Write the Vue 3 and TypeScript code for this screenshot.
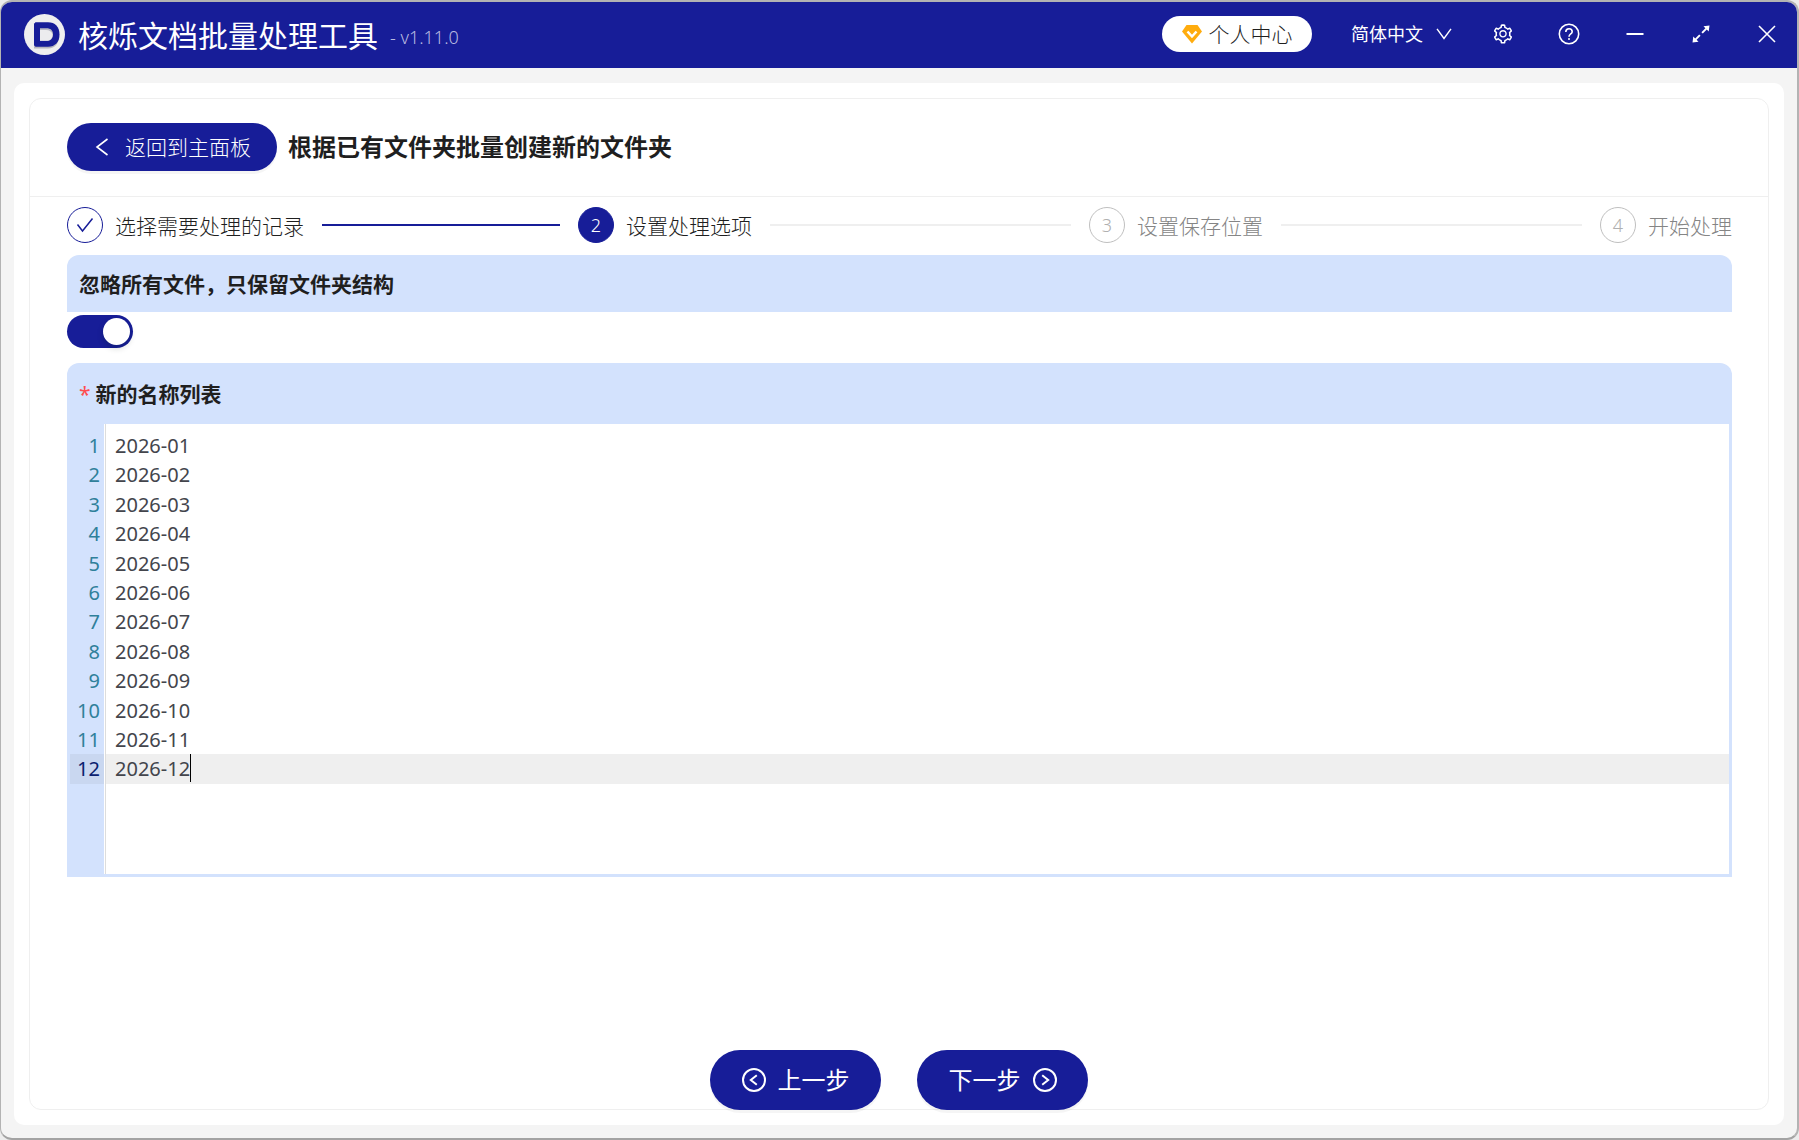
<script setup lang="ts">
import { computed, nextTick, onMounted, ref, watch } from 'vue'

interface Step {
  label: string
  state: 'done' | 'active' | 'wait'
}

const steps: Step[] = [
  { label: '选择需要处理的记录', state: 'done' },
  { label: '设置处理选项', state: 'active' },
  { label: '设置保存位置', state: 'wait' },
  { label: '开始处理', state: 'wait' },
]

const language = ref('zh-CN')
const ignoreFiles = ref(true)
const names = ref(
  Array.from({ length: 12 }, (_, i) => `2026-${String(i + 1).padStart(2, '0')}`).join('\n'),
)
const lines = computed(() => names.value.split('\n'))
const activeLine = ref(lines.value.length - 1)
const activeColumn = ref(lines.value[lines.value.length - 1].length)

const editor = ref<HTMLTextAreaElement | null>(null)
const caretLeft = ref(0)

function placeCaret() {
  const el = editor.value
  const ctx = document.createElement('canvas').getContext('2d')
  if (!el || !ctx) return
  const css = getComputedStyle(el)
  ctx.font = `${css.fontWeight} ${css.fontSize} ${css.fontFamily}`
  const before = (lines.value[activeLine.value] ?? '').slice(0, activeColumn.value)
  caretLeft.value = Math.round(ctx.measureText(before).width)
}

function syncCursor() {
  const el = editor.value
  if (!el) return
  const before = el.value.slice(0, el.selectionStart).split('\n')
  activeLine.value = before.length - 1
  activeColumn.value = before[before.length - 1].length
}

onMounted(placeCaret)
watch([activeLine, activeColumn, names], () => nextTick(placeCaret))
</script>

<template>
  <div class="window">
    <header class="titlebar">
      <svg class="logo" viewBox="0 0 41 41" aria-hidden="true">
        <circle cx="20.500" cy="20.500" r="20.500" fill="#efefef" />
        <path d="M10 11h14c7 0 11 4 11 11s-4 12.500-11 12.500H10z" fill="#8f8f9c" opacity=".6" />
        <path fill="#171d98" d="M11.500 8.300H24c7 0 11.500 4.500 11.500 12.200S31 32.700 24 32.700H11.500L10 31.200V9.800z" />
        <path d="M16 14.300h6.500c4 0 6.500 2 6.500 6.200s-2.500 6.300-6.500 6.300H16z" fill="#b9b9c4" />
        <path d="M16 16h6c3.500 0 5.800 1.500 6.500 4.500 0 4.200-2.500 6.300-6.500 6.300h-6z" fill="#ececee" />
      </svg>
      <div class="brand">
        <h1 class="app-name">核烁文档批量处理工具</h1>
        <span class="version">- v1.11.0</span>
      </div>

      <button type="button" class="profile">
        <svg width="20" height="20" viewBox="0 0 20 20" aria-hidden="true">
          <path d="M4.500 1h11L20 7.500 10 19.500 0 7.500z" fill="#ffac0e" />
          <path d="M5.500 7.500l4.500 5 4.500-5" fill="none" stroke="#fff" stroke-width="2.500" />
        </svg>
        <span>个人中心</span>
      </button>

      <div class="language">
        <select v-model="language" aria-label="语言">
          <option value="zh-CN">简体中文</option>
        </select>
        <svg width="16" height="12" viewBox="0 0 16 12" aria-hidden="true">
          <path d="M1 .8l7 9.700L15 .8" fill="none" stroke="#fff" stroke-width="1.400" />
        </svg>
      </div>

      <div class="window-actions">
        <button type="button" aria-label="设置">
          <svg width="22" height="22" viewBox="0 0 1024 1024" fill="#fff">
            <path d="M924.8 625.7l-65.5-56c3.1-19 4.7-38.4 4.7-57.8s-1.6-38.8-4.7-57.8l65.5-56a32.03 32.03 0 009.3-35.2l-.9-2.6a443.74 443.74 0 00-79.7-137.9l-1.8-2.1a32.12 32.12 0 00-35.1-9.5l-81.3 28.9c-30-24.6-63.5-44-99.7-57.6l-15.7-85a32.05 32.05 0 00-25.8-25.7l-2.7-.5c-52.1-9.4-106.9-9.4-159 0l-2.7.5a32.05 32.05 0 00-25.8 25.7l-15.8 85.4a351.86 351.86 0 00-99 57.4l-81.9-29.1a32 32 0 00-35.1 9.5l-1.8 2.1a446.02 446.02 0 00-79.7 137.9l-.9 2.6c-4.5 12.5-.8 26.5 9.3 35.2l66.3 56.6c-3.1 18.8-4.6 38-4.6 57.1 0 19.2 1.5 38.4 4.6 57.1L99 625.5a32.03 32.03 0 00-9.3 35.2l.9 2.6c18.1 50.4 44.9 96.9 79.7 137.9l1.8 2.1a32.12 32.12 0 0035.1 9.5l81.9-29.1c29.8 24.5 63.1 43.9 99 57.4l15.8 85.4a32.05 32.05 0 0025.8 25.7l2.7.5a449.4 449.4 0 00159 0l2.7-.5a32.05 32.05 0 0025.8-25.7l15.7-85a350 350 0 0099.7-57.6l81.3 28.9a32 32 0 0035.1-9.5l1.8-2.1c34.8-41.1 61.6-87.5 79.7-137.9l.9-2.6c4.5-12.3.8-26.3-9.3-35zM788.3 465.9c2.5 15.1 3.8 30.6 3.8 46.1s-1.3 31-3.8 46.1l-6.6 40.1 74.7 63.9a370.03 370.03 0 01-42.6 73.6L721 702.8l-31.4 25.8c-23.9 19.6-50.5 35-79.3 45.8l-38.1 14.3-17.9 97a377.5 377.5 0 01-85 0l-17.9-97.2-37.8-14.5c-28.5-10.8-55-26.2-78.7-45.7l-31.4-25.9-93.4 33.2c-17-22.9-31.2-47.6-42.6-73.6l75.5-64.5-6.5-40c-2.4-14.9-3.7-30.3-3.7-45.5 0-15.3 1.2-30.6 3.7-45.5l6.5-40-75.5-64.5c11.3-26.1 25.6-50.7 42.6-73.6l93.4 33.2 31.4-25.9c23.7-19.5 50.2-34.9 78.7-45.7l37.9-14.3 17.9-97.2c28.1-3.2 56.8-3.2 85 0l17.9 97 38.1 14.3c28.7 10.8 55.4 26.2 79.3 45.8l31.4 25.8 92.8-32.9c17 22.9 31.2 47.6 42.6 73.6L781.8 426l6.5 39.9zM512 326c-97.2 0-176 78.8-176 176s78.8 176 176 176 176-78.8 176-176-78.8-176-176-176zm79.2 255.2A111.6 111.6 0 01512 614c-29.9 0-58-11.7-79.2-32.8A111.6 111.6 0 01400 502c0-29.9 11.7-58 32.8-79.2C454 401.6 482.1 390 512 390c29.9 0 58 11.6 79.2 32.8A111.6 111.6 0 01624 502c0 29.9-11.7 58-32.8 79.2z" />
          </svg>
        </button>
        <button type="button" aria-label="帮助">
          <svg width="22" height="22" viewBox="0 0 22 22" fill="none" stroke="#fff" stroke-width="1.600">
            <circle cx="11" cy="11" r="9.700" />
            <path d="M7.800 9c0-2 1.300-3.300 3.200-3.300S14.200 7 14.200 8.700c0 2.300-3.200 2.200-3.200 5" />
            <circle cx="11" cy="16" r="1" fill="#fff" stroke="none" />
          </svg>
        </button>
        <button type="button" aria-label="最小化">
          <svg width="22" height="22" viewBox="0 0 22 22"><path d="M2.500 11h17" stroke="#fff" stroke-width="1.800" /></svg>
        </button>
        <button type="button" aria-label="最大化">
          <svg width="22" height="22" viewBox="0 0 22 22" fill="#fff">
            <path d="M19.500 2.500l-.8 6-1.900-1.900-4 4-1.400-1.400 4-4-1.900-1.900z" />
            <path d="M2.500 19.500l.8-6 1.900 1.900 4-4 1.400 1.400-4 4 1.900 1.900z" />
          </svg>
        </button>
        <button type="button" aria-label="关闭">
          <svg width="22" height="22" viewBox="0 0 22 22"><path d="M3 3l16 16M19 3L3 19" stroke="#fff" stroke-width="1.600" /></svg>
        </button>
      </div>
    </header>

    <main class="page">
      <section class="panel">
        <div class="panel-head">
          <button type="button" class="back">
            <svg width="14" height="18" viewBox="0 0 14 18" aria-hidden="true">
              <path d="M12.500 1L2 9l10.500 8" fill="none" stroke="#fff" stroke-width="1.600" />
            </svg>
            <span>返回到主面板</span>
          </button>
          <h2>根据已有文件夹批量创建新的文件夹</h2>
        </div>

        <ol class="steps">
          <li v-for="(step, i) in steps" :key="step.label" :class="['step', step.state]">
            <span class="badge">
              <svg v-if="step.state === 'done'" width="18" height="16" viewBox="0 0 18 16" aria-hidden="true">
                <path d="M1.500 7.500l5 6.500L16.500 1.500" fill="none" stroke="#171d98" stroke-width="1.500" />
              </svg>
              <template v-else>{{ i + 1 }}</template>
            </span>
            <span class="step-label">{{ step.label }}</span>
          </li>
        </ol>

        <div class="fields">
          <div class="field">
            <label class="field-title" for="ignore-files">忽略所有文件，只保留文件夹结构</label>
            <input id="ignore-files" v-model="ignoreFiles" class="switch" type="checkbox" role="switch" />
          </div>

          <div class="field">
            <label class="field-title tall" for="name-list"><span class="required">*</span>新的名称列表</label>
            <div class="editor">
              <ol class="gutter" aria-hidden="true">
                <li v-for="(_, i) in lines" :key="i" :class="{ current: i === activeLine }">{{ i + 1 }}</li>
              </ol>
              <div class="code">
                <div class="current-line" :style="{ '--line': activeLine }">
                  <i class="caret" :style="{ left: caretLeft + 'px' }"></i>
                </div>
                <textarea
                  id="name-list"
                  ref="editor"
                  v-model="names"
                  spellcheck="false"
                  @input="syncCursor"
                  @click="syncCursor"
                  @keyup="syncCursor"
                ></textarea>
              </div>
            </div>
          </div>
        </div>

        <footer class="pager">
          <button type="button">
            <svg width="24" height="24" viewBox="0 0 24 24" fill="none" stroke="#fff" stroke-width="2" aria-hidden="true">
              <circle cx="12" cy="12" r="11" />
              <path d="M14.800 7.200L8.800 12l6 4.800" />
            </svg>
            <span>上一步</span>
          </button>
          <button type="button">
            <span>下一步</span>
            <svg width="24" height="24" viewBox="0 0 24 24" fill="none" stroke="#fff" stroke-width="2" aria-hidden="true">
              <circle cx="12" cy="12" r="11" />
              <path d="M9.200 7.200l6 4.800-6 4.800" />
            </svg>
          </button>
        </footer>
      </section>
    </main>
  </div>
</template>

<style>
body {
  margin: 0;
  background: #ececec;
}
</style>

<style scoped>
* {
  box-sizing: border-box;
}

.window {
  --navy: #171d98;
  --sky: #d3e2fd;
  display: flex;
  flex-direction: column;
  min-height: 100vh;
  border: 2px solid #b3b3b3;
  border-left-width: 1px;
  border-bottom-color: #a3a3a3;
  border-radius: 12px;
  overflow: hidden;
  background: #f4f4f4;
  color: #1f1f1f;
  font-family: "Noto Sans", "Noto Sans CJK SC", sans-serif;
  font-size: 21px;
  font-weight: 300;
  line-height: 32px;
}

button,
select,
textarea {
  font: inherit;
}

button {
  display: flex;
  align-items: center;
  justify-content: center;
  padding: 0;
  border: 0;
  background: none;
  color: #fff;
  white-space: nowrap;
  cursor: pointer;
}

svg {
  flex: none;
}

.titlebar {
  display: flex;
  align-items: center;
  height: 66px;
  padding: 0 19px 2px 23px;
  background: var(--navy);
  color: #fff;
}

.logo {
  width: 41px;
  height: 41px;
}

.brand {
  display: flex;
  align-items: center;
  gap: 12px;
  margin-right: auto;
  padding: 3px 0 0 13px;
}

.app-name {
  margin: 0;
  font-size: 30px;
  font-weight: 400;
  white-space: nowrap;
}

.version {
  padding-top: 2px;
  color: #b9bbe0;
  font-size: 18px;
}

.profile {
  gap: 7px;
  width: 150px;
  height: 36px;
  border-radius: 18px;
  background: #fff;
  color: #1f1f1f;
}

.language {
  display: flex;
  align-items: center;
  margin: 0 40px 0 39px;
}

.language select {
  width: 101px;
  margin-right: -16px;
  padding: 0;
  border: 0;
  appearance: none;
  background: none;
  color: #fff;
  font-size: 18px;
  font-weight: 400;
}

.language svg {
  pointer-events: none;
}

.window-actions {
  display: flex;
  gap: 44px;
}

.page {
  display: flex;
  flex: 1;
  margin: 15px 13px 13px;
  padding: 15px;
  border-radius: 10px;
  background: #fff;
}

.panel {
  display: flex;
  flex: 1;
  flex-direction: column;
  min-width: 0;
  border: 1px solid #efefef;
  border-radius: 12px;
}

.panel-head {
  display: flex;
  align-items: center;
  gap: 11px;
  height: 98px;
  padding: 0 37px 1px;
  border-bottom: 1px solid #efefef;
}

.back {
  gap: 16px;
  width: 210px;
  height: 48px;
  padding-left: 2px;
  border-radius: 24px;
  background: var(--navy);
  box-shadow: 0 3px 0 rgba(0, 0, 0, 0.04);
}

.panel-head h2 {
  margin: 0;
  font-size: 24px;
  font-weight: 700;
}

.steps {
  display: grid;
  grid-template-columns: 1fr 1fr 1fr auto;
  gap: 18px;
  margin: 0;
  padding: 10px 36px 12px 37px;
  list-style: none;
}

.step {
  display: flex;
  align-items: center;
  white-space: nowrap;
}

.step:not(:last-child)::after {
  content: "";
  flex: 1;
  height: 2px;
  margin-left: 18px;
  background: #efefef;
}

.step.done::after {
  background: var(--navy) !important;
}

.step-label {
  padding-top: 2px;
}

.badge {
  display: flex;
  align-items: center;
  justify-content: center;
  width: 36px;
  height: 36px;
  margin-right: 12px;
  border: 1px solid var(--navy);
  border-radius: 50%;
  font-size: 18px;
}

.step.active .badge {
  background: var(--navy);
  color: #fff;
}

.step.wait {
  color: #858585;
}

.step.wait .badge {
  border-color: #bfbfbf;
  color: #b0b0b0;
}

.fields {
  display: flex;
  flex: 1;
  flex-direction: column;
  gap: 15px;
  padding: 0 36px 24px 37px;
}

.field-title {
  display: flex;
  align-items: center;
  height: 57px;
  padding: 0 12px;
  border-radius: 12px 12px 0 0;
  background: var(--sky);
  font-weight: 700;
}

.field-title.tall {
  height: 61px;
}

.required {
  margin-right: 5px;
  color: #ff4d4f;
  font-weight: 400;
}

.switch {
  display: block;
  width: 66px;
  height: 33px;
  margin: 3px 0 0;
  padding: 3px;
  border-radius: 17px;
  appearance: none;
  background: #bfbfbf;
  cursor: pointer;
}

.switch::before {
  content: "";
  display: block;
  width: 27px;
  height: 27px;
  border-radius: 50%;
  background: #fff;
  box-shadow: 0 3px 6px rgba(0, 35, 11, 0.2);
}

.switch:checked {
  background: var(--navy);
}

.switch:checked::before {
  margin-left: auto;
}

.editor {
  display: flex;
  height: 453px;
  border: 3px solid var(--sky);
  border-top: 0;
  background: #fff;
  color: #43454c;
  font-size: 20px;
  font-weight: 400;
  line-height: 1.47;
}

.gutter {
  width: 34px;
  margin: 0 1px 0 0;
  padding: 7px 0 0;
  list-style: none;
  background: var(--sky);
  color: #2f809a;
  text-align: right;
}

.gutter li {
  padding-right: 4px;
}

.gutter .current {
  background: #c9d7f0;
  color: #0b216f;
}

.code {
  position: relative;
  flex: 1;
  border-left: 1px solid #dddddd;
}

.code textarea {
  position: relative;
  display: block;
  width: 100%;
  height: 100%;
  padding: 7px 9px 0;
  border: 0;
  outline: 0;
  resize: none;
  background: none;
  color: inherit;
  caret-color: transparent;
}

.current-line {
  position: absolute;
  top: calc(7px + var(--line) * 1.47em);
  right: 0;
  left: 0;
  height: 1.47em;
  padding-left: 9px;
  background: #efefef;
}

.caret {
  position: relative;
  display: block;
  width: 1px;
  height: 28px;
  background: #000;
}

.pager {
  display: flex;
  justify-content: center;
  gap: 36px;
  margin-bottom: -1px;
}

.pager button {
  gap: 12px;
  width: 171px;
  height: 60px;
  border-radius: 30px;
  background: var(--navy);
  box-shadow: 0 3px 0 rgba(0, 0, 0, 0.04);
  font-size: 24px;
  font-weight: 400;
}
</style>
